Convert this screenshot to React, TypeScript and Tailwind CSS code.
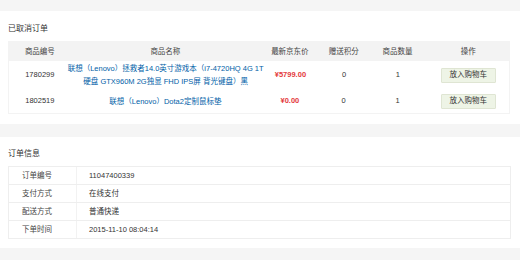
import React from "react";

const cols = ["w-[62px]", "w-[190px]", "w-[60px]", "w-[48px]", "w-[60px]", "w-[82px]"];

const items = [
  {
    id: "1780299",
    name: ["联想（Lenovo）拯救者14.0英寸游戏本（i7-4720HQ 4G 1T", "硬盘 GTX960M 2G独显 FHD IPS屏 背光键盘）黑"],
    price: "¥5799.00",
    h: "h-[28px]",
  },
  { id: "1802519", name: ["联想（Lenovo）Dota2定制鼠标垫"], price: "¥0.00", h: "h-[24px]" },
];

const info = [
  ["订单编号", "11047400339"],
  ["支付方式", "在线支付"],
  ["配送方式", "普通快递"],
  ["下单时间", "2015-11-10 08:04:14"],
];

const App = () => {
  return (
    <div
      className="w-[520px] h-[260px] overflow-hidden bg-[#f5f5f5] pt-[11px] text-[7.5px] text-[#333]"
      style={{ fontFamily: '"Liberation Sans", "Noto Sans CJK SC", sans-serif' }}
    >
      {/* cancelled orders */}
      <div className="bg-white h-[113px] px-[8px] pt-[12px]">
        <p className="text-[8px] leading-[12px] mb-[6px]">已取消订单</p>
        <div className="w-[502px] border border-[#f3f3f3]">
          <div className="flex h-[19px] items-center bg-[#f3f3f3] text-[#444]">
            {["商品编号", "商品名称", "最新京东价", "赠送积分", "商品数量", "操作"].map((t, i) => (
              <div key={t} className={`${cols[i]} text-center`}>
                {t}
              </div>
            ))}
          </div>
          {items.map((it) => (
            <div key={it.id} className={`flex items-center ${it.h}`}>
              <div className={`${cols[0]} text-center`}>{it.id}</div>
              <div className={`${cols[1]} flex flex-col items-center text-[#005ea7] leading-[13px]`}>
                {it.name.map((l) => (
                  <span key={l} className="whitespace-nowrap">
                    {l}
                  </span>
                ))}
              </div>
              <div className={`${cols[2]} text-center text-[#e4393c] font-bold`}>{it.price}</div>
              <div className={`${cols[3]} text-center`}>0</div>
              <div className={`${cols[4]} text-center`}>1</div>
              <div className={`${cols[5]} flex justify-center`}>
                <button className="w-[55px] h-[15px] border border-[#dfe5d3] bg-[#eef4e6] text-[#333] rounded-[1px]">
                  放入购物车
                </button>
              </div>
            </div>
          ))}
        </div>
      </div>

      {/* order info */}
      <div className="bg-white h-[111px] mt-[13px] px-[8px] pt-[11px]">
        <p className="text-[8px] leading-[12px] mb-[6px]">订单信息</p>
        <div className="w-[503px] border-t border-x border-[#eeeeee]">
          {info.map(([k, v]) => (
            <div key={k} className="flex h-[18px] items-center border-b border-[#eeeeee]">
              <div className="w-[68px] h-full flex items-center pl-[13px] border-r border-[#f2f2f2] text-[#444]">{k}</div>
              <div className="pl-[12px]">{v}</div>
            </div>
          ))}
        </div>
      </div>
    </div>
  );
};

export default App;
